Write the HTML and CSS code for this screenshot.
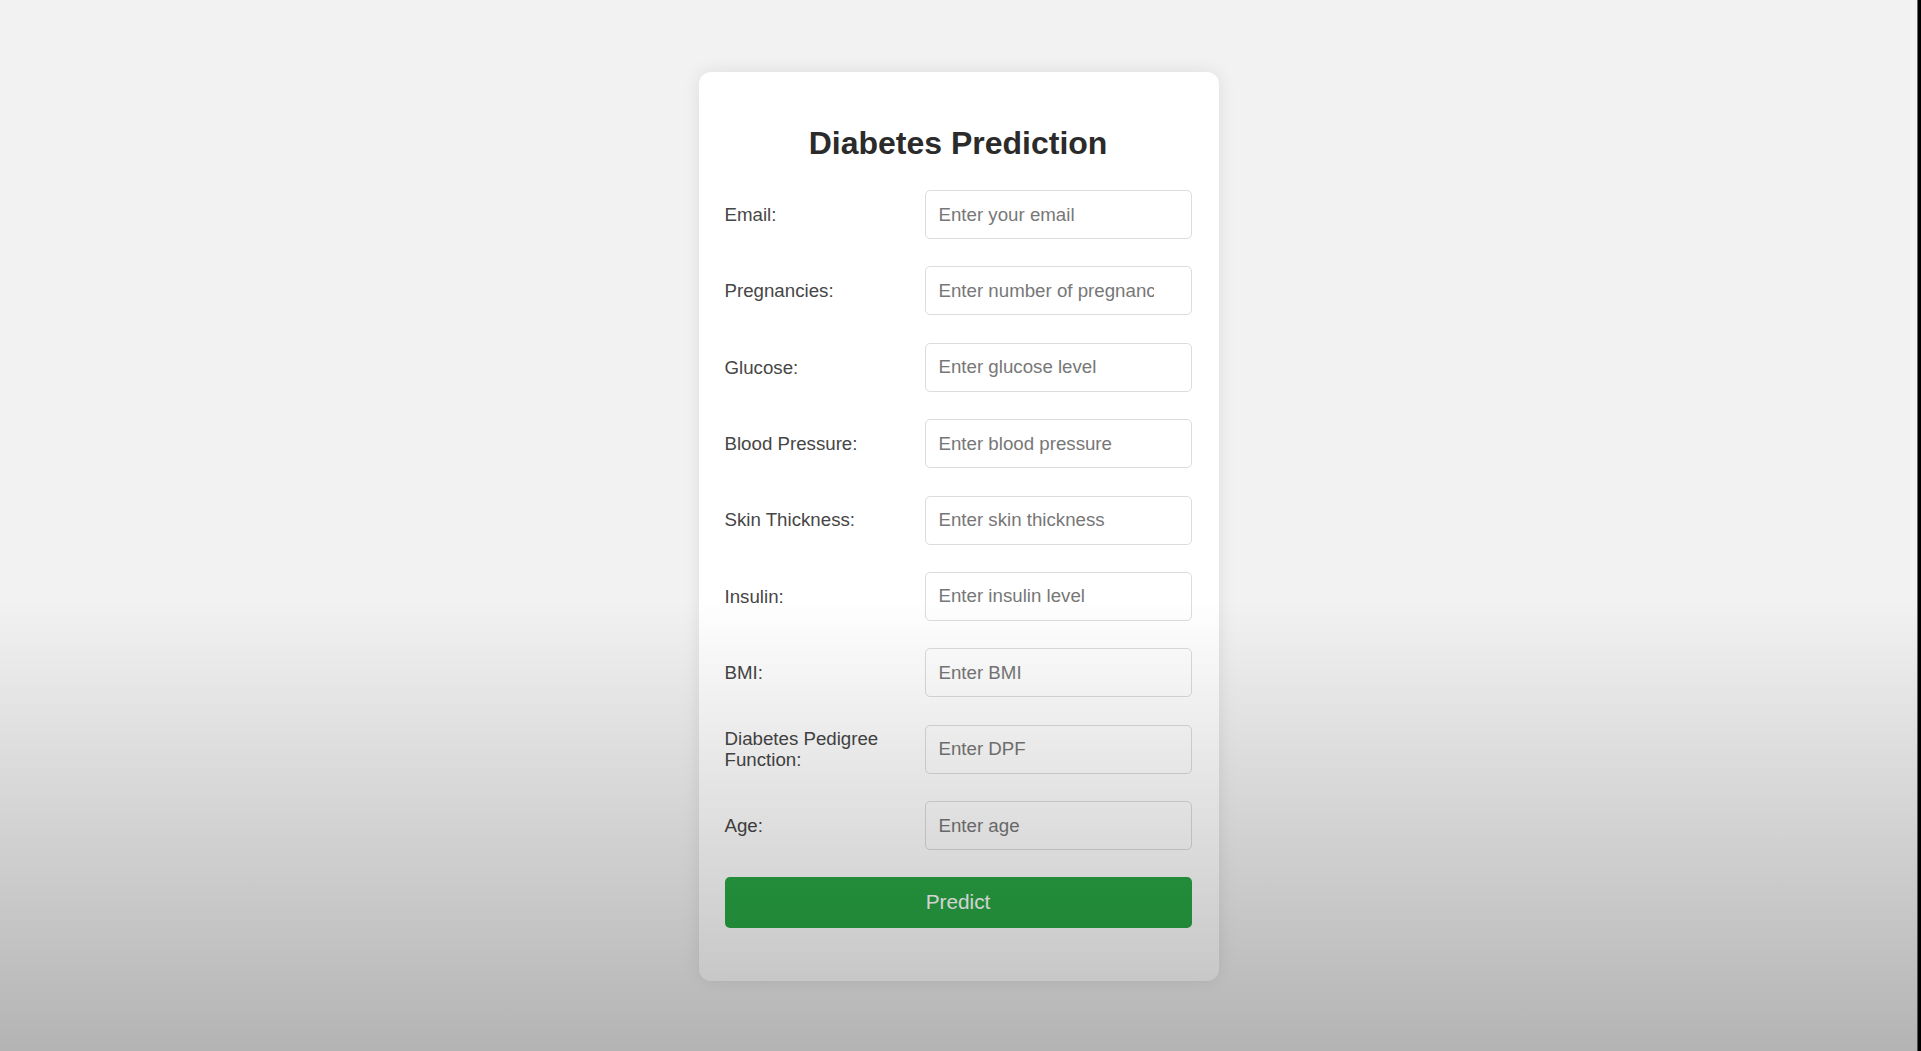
FILE: index.html
```html
<!DOCTYPE html>
<html lang="en">
<head>
<meta charset="utf-8">
<title>Diabetes Prediction</title>
<link rel="stylesheet" href="styles.css">
</head>
<body>
<div class="stage">
  <form class="card">
    <h1 class="title">Diabetes Prediction</h1>
    <div class="fields">
      <label class="label" for="email">Email:</label>
      <input class="input" id="email" type="text" placeholder="Enter your email">
      <label class="label" for="preg">Pregnancies:</label>
      <input class="input" id="preg" type="text" placeholder="Enter number of pregnancies">
      <label class="label" for="glu">Glucose:</label>
      <input class="input" id="glu" type="text" placeholder="Enter glucose level">
      <label class="label" for="bp">Blood Pressure:</label>
      <input class="input" id="bp" type="text" placeholder="Enter blood pressure">
      <label class="label" for="skin">Skin Thickness:</label>
      <input class="input" id="skin" type="text" placeholder="Enter skin thickness">
      <label class="label" for="ins">Insulin:</label>
      <input class="input" id="ins" type="text" placeholder="Enter insulin level">
      <label class="label" for="bmi">BMI:</label>
      <input class="input" id="bmi" type="text" placeholder="Enter BMI">
      <label class="label" for="dpf">Diabetes Pedigree Function:</label>
      <input class="input" id="dpf" type="text" placeholder="Enter DPF">
      <label class="label" for="age">Age:</label>
      <input class="input" id="age" type="text" placeholder="Enter age">
    </div>
    <button class="predict" type="button">Predict</button>
  </form>
</div>
<div class="edge"></div>
<div class="shade"></div>
</body>
</html>
```

FILE: styles.css
```css
html, body {
  margin: 0;
  padding: 0;
  height: 1051px;
  overflow: hidden;
}
body {
  display: flex;
  background: #f2f2f2;
  font-family: "Liberation Sans", Arial, sans-serif;
  position: relative;
}
.stage {
  flex: 1;
  display: flex;
  justify-content: center;
  align-items: flex-start;
}
.edge {
  width: 3px;
  background: #000;
  border-left: 1px solid #6a6a6a;
}
.card {
  margin-top: 72px;
  width: 520px;
  box-sizing: border-box;
  padding: 26px 27px 53px 26px;
  background: #fff;
  border-radius: 12px;
  box-shadow: 0 0 18px rgba(0, 0, 0, 0.09);
}
.title {
  margin: 27px 0 28px;
  font-size: 32px;
  line-height: 37px;
  font-weight: bold;
  text-align: center;
  color: #2b2b2b;
}
.fields {
  display: grid;
  grid-template-columns: 200px 1fr;
  row-gap: 27.4px;
  align-items: center;
}
.label {
  font-size: 18.7px;
  line-height: 21.5px;
  color: #464646;
  padding-right: 16px;
}
.input {
  height: 49px;
  box-sizing: border-box;
  width: 100%;
  padding: 0 37px 0 13px;
  border: 1px solid #dcdcdc;
  border-radius: 5px;
  background: #fff;
  font-family: "Liberation Sans", Arial, sans-serif;
  font-size: 18.7px;
  color: #333;
  outline: none;
}
.input::placeholder {
  color: #777;
}
.predict {
  display: block;
  margin-top: 26.5px;
  width: 100%;
  height: 51px;
  border: none;
  border-radius: 5px;
  background: #28a745;
  color: #fff;
  font-family: "Liberation Sans", Arial, sans-serif;
  font-size: 20.8px;
}
.shade {
  position: absolute;
  inset: 0;
  pointer-events: none;
  background: linear-gradient(to bottom, rgba(0, 0, 0, 0) 57%, rgba(0, 0, 0, 0.26) 100%);
}
```
